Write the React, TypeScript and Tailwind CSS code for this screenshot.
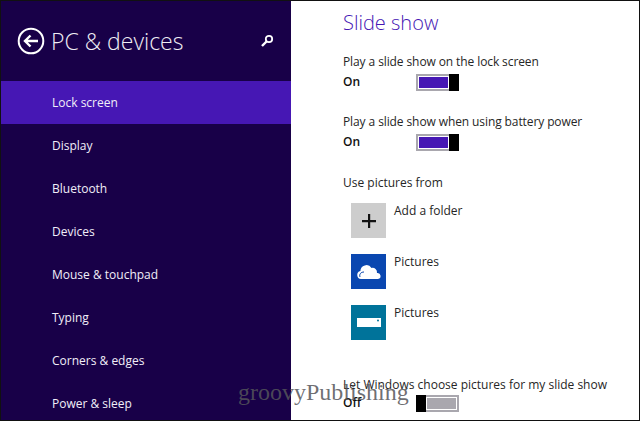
import React from 'react';

const font = { fontFamily: '"Open Sans", "Noto Sans", sans-serif' };

const navItems = ['Lock screen', 'Display', 'Bluetooth', 'Devices', 'Mouse & touchpad', 'Typing', 'Corners & edges', 'Power & sleep'];

function Toggle({ on }: { on: boolean }) {
  return (
    <div className={`flex w-[43px] h-[17px] border-2 border-[#a9a7ae] ${on ? 'justify-end' : ''} relative`}>
      {on ? (
        <>
          <div className="flex-1 m-[1px] bg-[#4617b4]" />
          <div className="w-[10px] -my-[2px] -mr-[2px] bg-black" />
        </>
      ) : (
        <>
          <div className="w-[10px] -my-[2px] -ml-[2px] bg-black" />
          <div className="flex-1 m-[1px] bg-[#a9a7ae]" />
        </>
      )}
    </div>
  );
}

function ToggleRow({ label, on, className }: { label: string; on: boolean; className: string }) {
  return (
    <div className={className}>
      <div className="text-[12px] leading-[17px] text-[#262626] tracking-[-0.1px]">{label}</div>
      <div className="flex items-center mt-[3px] h-[18px]">
        <span className="w-[73px] text-[12px] font-semibold text-[#111]">{on ? 'On' : 'Off'}</span>
        <Toggle on={on} />
      </div>
    </div>
  );
}

function PictureRow({ bg, label, children }: { bg: string; label: string; children: React.ReactNode }) {
  return (
    <div className={'flex h-[35px] mb-[16px]'}>
      <div className={`w-[35px] h-[35px] flex items-center justify-center ${bg}`}>{children}</div>
      <span className="ml-[8px] -mt-[1px] text-[12px] leading-[17px] text-[#262626]">{label}</span>
    </div>
  );
}

export default function App() {
  return (
    <div className="relative flex w-[640px] h-[421px] overflow-hidden border border-[#111] bg-white" style={font}>
      <aside className="w-[290px] h-full bg-[#180048] text-white shrink-0">
        <div className="flex items-center h-[80px] pl-[16px] pt-[-2px]">
          <svg width="28" height="28" viewBox="0 0 28 28" fill="none" stroke="white">
            <circle cx="14" cy="14" r="12.3" strokeWidth="2" />
            <path d="M21 14H8M13.5 8.5L8 14l5.500 5.500" strokeWidth="2.400" />
          </svg>
          <span className="ml-[6px] text-[23px] font-light text-[#f0eef5]">PC &amp; devices</span>
          <svg className="ml-auto mr-[17px]" width="14" height="14" viewBox="0 0 14 14" fill="none" stroke="white">
            <circle cx="9" cy="5" r="3.200" strokeWidth="1.800" />
            <path d="M6.500 7.500L2 12" strokeWidth="2.400" />
          </svg>
        </div>
        <nav>
          {navItems.map((item, i) => (
            <div key={item} className={`flex items-center h-[43px] pl-[51px] text-[12px] ${i === 0 ? 'bg-[#4617b4]' : ''} text-[#f1eef8]`}>
              {item}
            </div>
          ))}
        </nav>
      </aside>
      <main className="flex-1 pl-[52px]">
        <h1 className="mt-[6px] text-[20px] leading-[32px] font-light text-[#4617b4]">Slide show</h1>
        <ToggleRow className="mt-[14px]" label="Play a slide show on the lock screen" on />
        <ToggleRow className="mt-[22px]" label="Play a slide show when using battery power" on />
        <div className="mt-[23px] text-[12px] leading-[17px] text-[#262626]">Use pictures from</div>
        <div className="mt-[12px] ml-[8px]">
          <PictureRow bg="bg-[#cdcdcd]" label="Add a folder">
            <svg width="16" height="16" viewBox="0 0 16 16" fill="#111"><path d="M7 1h2.200v6H15v2.200H9.200V15H7V9.200H1V7h6z" /></svg>
          </PictureRow>
          <PictureRow bg="bg-[#0a47b0]" label="Pictures">
            <svg width="26" height="16" viewBox="0 0 26 16" fill="white">
              <path d="M5 15a4 4 0 0 1-.6-7.900A6 6 0 0 1 15.500 4a4.500 4.500 0 0 1 5.500 5 3 3 0 0 1 1 6z" />
              <path d="M4 13c-1-3 1-5 4-5" stroke="#0a47b0" strokeWidth="1" fill="none" />
            </svg>
          </PictureRow>
          <PictureRow bg="bg-[#00739a]" label="Pictures">
            <svg width="24" height="9" viewBox="0 0 24 9"><path d="M0 0h24v9H0z" fill="white" /><circle cx="21" cy="2.500" r="1" fill="#00739a" /></svg>
          </PictureRow>
        </div>
      </main>
      <div className="absolute left-[342px] top-[375px] w-[280px]">
        <div className="text-[12px] leading-[17px] text-[#262626]">Let Windows choose pictures for my slide show</div>
        <div className="flex items-center h-[18px] mt-[1px]">
          <span className="w-[73px] text-[12px] font-semibold text-[#111]">Off</span>
          <Toggle on={false} />
        </div>
      </div>
      <div className="absolute left-[237px] top-[376px] text-[24px] leading-[30px] text-[#55555a]/85" style={{ fontFamily: '"Liberation Serif", serif' }}>groovyPublishing</div>
    </div>
  );
}
